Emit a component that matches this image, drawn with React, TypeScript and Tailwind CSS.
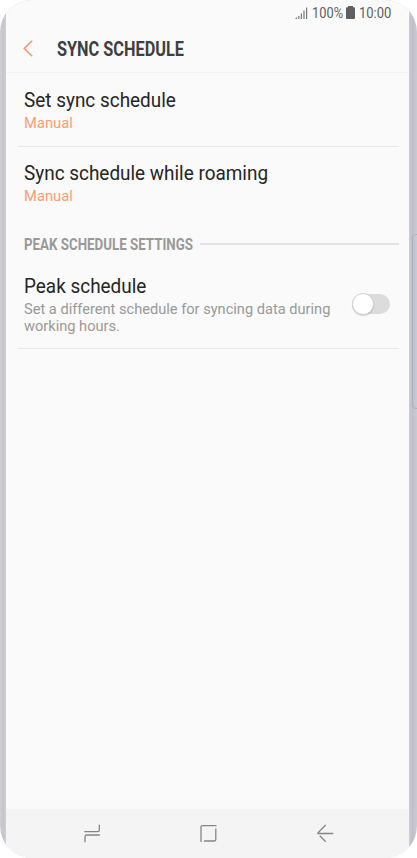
const items = [
  { title: "Set sync schedule", value: "Manual" },
  { title: "Sync schedule while roaming", value: "Manual" },
];

function StatusBar() {
  return (
    <div className="flex h-[26px] items-center justify-end pr-[17px] text-[15.4px] text-[#5f5f5f]">
      <svg className="mr-[4px] h-[12px] w-[13px]" viewBox="0 0 13 12" fill="currentColor">
        <path d="M0 12L2 10V12ZM3.2 9H4.4V12H3.2ZM5.8 6.5H7V12H5.8ZM8.4 3.5H9.6V12H8.4ZM11 0.5H12.2V12H11Z" opacity="0.85" />
      </svg>
      <span className="w-[31px] pt-[2px] whitespace-nowrap">
        <span className="inline-block origin-left scale-x-[0.835]">100%</span>
      </span>
      <svg className="relative -top-px mr-[4px] ml-[3px] h-[13px] w-[9px]" viewBox="0 0 9 13" fill="currentColor">
        <path d="M2 0H7V1.2H8Q9 1.2 9 2.2V12Q9 13 8 13H1Q0 13 0 12V2.2Q0 1.2 1 1.2H2Z" />
      </svg>
      <span className="w-[33px] pt-[2px] whitespace-nowrap">
        <span className="inline-block origin-left scale-x-[0.845]">10:00</span>
      </span>
    </div>
  );
}

function NavBar() {
  return (
    <div className="flex h-[49px] items-center justify-between bg-[#f4f4f4] pr-[74px] pb-[2px] pl-[76px] text-[#858585]">
      <svg className="h-5 w-5" viewBox="0 0 20 20" fill="none" stroke="currentColor" strokeWidth="1.3">
        <path d="M2.3 8.7H15.5Q17.3 8.7 17.3 6.9V1.8M17.8 12H4.8Q3 12 3 13.8V19.3" />
      </svg>
      <svg className="relative -left-px h-5 w-5" viewBox="0 0 20 20" fill="none" stroke="currentColor" strokeWidth="1.3">
        <path d="M3 19V4Q3 2.6 4.4 2.6H18.5M17.8 5.5V16.6Q17.8 18 16.4 18H6" />
      </svg>
      <svg className="h-5 w-5" viewBox="0 0 20 20" fill="none" stroke="currentColor" strokeWidth="1.3">
        <path d="M10.7 2L3 9.7V10.5H18.3M4.8 12.8L10.7 18.7" />
      </svg>
    </div>
  );
}

export default function App() {
  return (
    <div className="h-[858px] w-[417px] bg-white font-['Roboto',sans-serif]">
      <div className="relative h-full overflow-hidden rounded-[32px] bg-[linear-gradient(90deg,#d0d1d6_0px,#c5c6cd_3px,#cdced4_6px,#cdced4_409px,#bfc0c8_412px,#cbccd2_417px)] pr-2 pl-1.5">
        <div className="flex h-full flex-col bg-[#fafafa]">
          <StatusBar />

          {/* Header */}
          <header className="flex h-[47px] items-center border-b border-[#f3f3f3] pl-[17px]">
            <svg className="mb-[2px] h-[17px] w-[10px]" viewBox="0 0 10 17" fill="none" stroke="#ff9369" strokeWidth="1.6">
              <path d="M9.2 0.8L1.3 8.5L9.2 16.2" />
            </svg>
            <h1 className="mt-[3px] ml-[24px] origin-left scale-x-[0.845] text-[19.3px] font-bold whitespace-nowrap text-[#3f3f3f]">
              SYNC SCHEDULE
            </h1>
          </header>

          {/* Sync settings */}
          <div className="mr-[10px] ml-[12px]">
            {items.map((item, index) => (
              <div
                key={item.title}
                className={`pl-[6.4px] ${index === 0 ? "h-[74px] border-b border-[#e8e8e8] pt-[15px]" : "h-[72px] pt-[14px]"}`}
              >
                <div className="origin-left scale-x-[0.957] text-[19.8px] leading-[26px] text-[#252525]">{item.title}</div>
                <div className="origin-left scale-x-[0.965] text-[15.3px] leading-[19px] text-[#ff9b74]">{item.value}</div>
              </div>
            ))}

            <div className="mt-[13px] flex h-[24px] items-center pl-[6.4px]">
              <div className="w-[175.6px] pt-[2px]">
                <h2 className="origin-left scale-x-[0.838] text-[15.9px] font-bold whitespace-nowrap text-[#999]">
                  PEAK SCHEDULE SETTINGS
                </h2>
              </div>
              <div className="h-[2px] flex-1 bg-[#e3e3e3]" />
            </div>

            <div className="flex h-[93px] border-b border-[#e8e8e8] pl-[6.4px]">
              <div className="w-[327.6px] pt-[18px]">
                <div className="origin-left scale-x-[0.957] text-[19.8px] leading-[26px] text-[#252525]">Peak schedule</div>
                <div className="origin-left scale-x-[0.955] pt-px text-[15.3px] leading-[17px] whitespace-nowrap text-[#999]">
                  Set a different schedule for syncing data during
                  <br />
                  working hours.
                </div>
              </div>
              <div className="mt-[38px] flex h-[20px] w-[38px] items-center rounded-full bg-[#dcdcdc]">
                <div className="h-[22px] w-[22px] shrink-0 rounded-full border border-[#d0d0d0] bg-white shadow-[0_1px_1px_rgba(0,0,0,0.15)]" />
              </div>
            </div>
          </div>

          <div className="flex-1" />
          <NavBar />
        </div>

        {/* Edge button on the side of the phone */}
        <div className="absolute top-[234px] -right-[5px] h-[175px] w-[10px] rounded-[4px] border border-[#acaeb8]" />
      </div>
    </div>
  );
}
